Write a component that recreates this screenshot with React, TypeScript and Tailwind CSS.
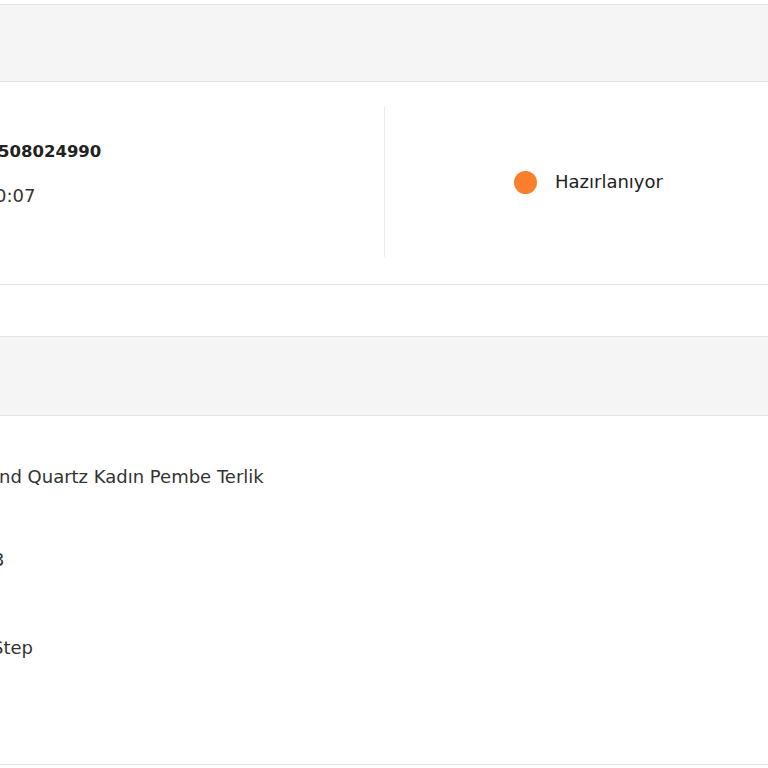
export default function App() {
  return (
    <div className="w-[768px] h-[768px] overflow-hidden bg-white text-[#222] font-['DejaVu_Sans',sans-serif]">
      <div className="pt-[4px]">
        <section className="border-y border-[#e3e3e3]">
          <div className="h-[77px] bg-[#f5f5f5] border-b border-[#e3e3e3]" />
          <div className="flex h-[202px] pt-[25px]">
            <div className="w-[385px] h-[150px] border-r border-[#ececec] overflow-hidden">
              <div className="mt-[33px] ml-[-2px] text-[16.5px] font-bold leading-[24px] whitespace-nowrap">508024990</div>
              <div className="mt-[20px] ml-[-5px] text-[18px] leading-[24px] whitespace-nowrap text-[#333]">0:07</div>
            </div>
            <div className="flex-1 h-[150px] flex items-center pl-[129px]">
              <span className="w-[23px] h-[23px] rounded-full bg-[#fa7f2c] shrink-0" />
              <span className="ml-[18px] text-[18px] leading-[24px] whitespace-nowrap">Hazırlanıyor</span>
            </div>
          </div>
        </section>
        <section className="mt-[51px] border-y border-[#e3e3e3]">
          <div className="h-[79px] bg-[#f5f5f5] border-b border-[#e3e3e3]" />
          <div className="h-[348px] overflow-hidden text-[18px] leading-[24px] text-[#333]">
            <div className="mt-[49px] ml-[-1px] whitespace-nowrap">nd Quartz Kadın Pembe Terlik</div>
            <div className="mt-[59px] ml-[-7px] whitespace-nowrap">3</div>
            <div className="mt-[64px] ml-[-8px] whitespace-nowrap">Step</div>
          </div>
        </section>
      </div>
    </div>
  );
}
